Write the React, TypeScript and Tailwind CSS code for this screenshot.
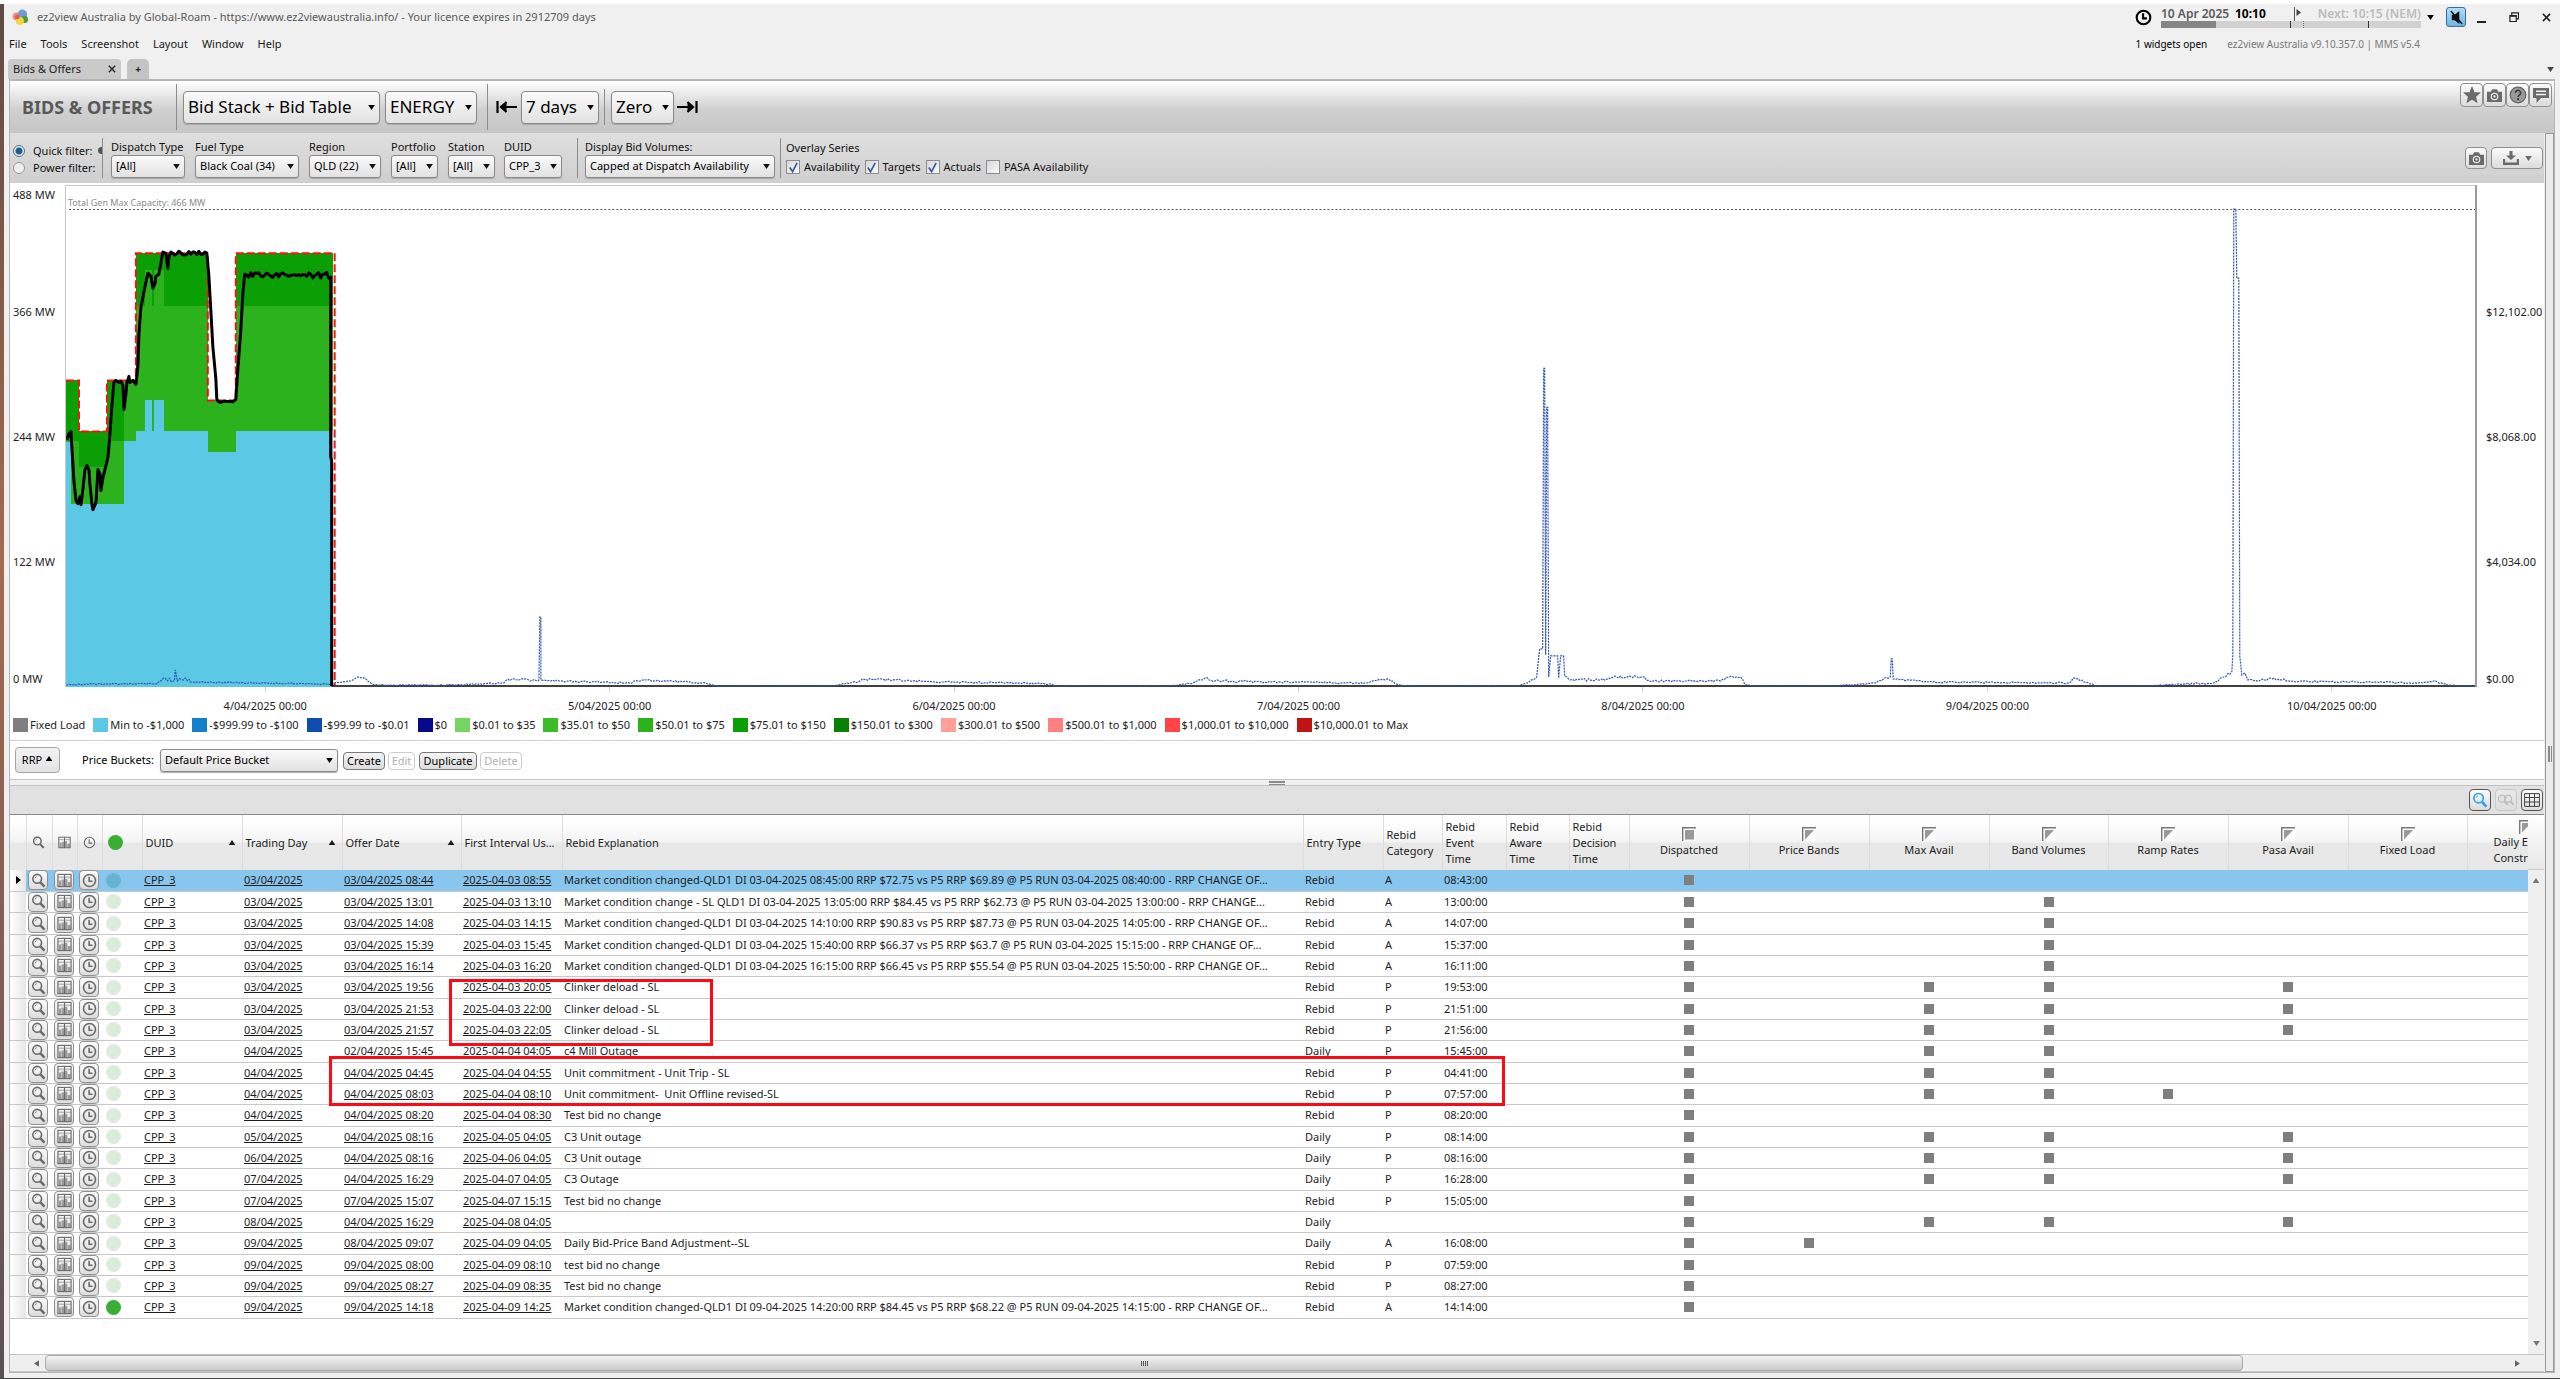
import { ReactNode, useId } from "react";

/* ---------- shared bits ---------- */

function Caret({ className = "" }: { className?: string }) {
  return (
    <svg viewBox="0 0 8 6" className={"h-[5px] w-[7px] " + className} aria-hidden="true">
      <path d="M0 0h8L4 6z" fill="currentColor" />
    </svg>
  );
}

function UpCaret({ className = "" }: { className?: string }) {
  return (
    <svg viewBox="0 0 8 6" className={"h-[5px] w-[8px] shrink-0 " + className} aria-hidden="true">
      <path d="M0 6h8L4 0z" fill="currentColor" />
    </svg>
  );
}

function Picker({
  value,
  label,
  size = "small",
  className,
}: {
  value: string;
  label: string;
  size?: "small" | "large";
  className: string;
}) {
  const look =
    size === "large" ? "h-[33px] rounded pl-1 text-[17px]" : "h-[23px] rounded-[3px] pl-1 text-[11px]";
  return (
    <span className={"inline-grid items-center " + className}>
      <select
        aria-label={label}
        className={
          "col-start-1 row-start-1 w-full appearance-none border border-[#8a8a8a] bg-linear-to-b from-[#fafafa] to-[#e2e2e2] text-black shadow-[0_1px_1px_#aaaaaa] " +
          look
        }
      >
        <option>{value}</option>
      </select>
      <Caret className="pointer-events-none col-start-1 row-start-1 mr-[5px] justify-self-end" />
    </span>
  );
}

function Field({ label, value, className }: { label: string; value: string; className: string }) {
  return (
    <div className={"flex shrink-0 flex-col " + className}>
      <span className="h-4 leading-4 whitespace-nowrap">{label}</span>
      <Picker label={label} value={value} className="w-full" />
    </div>
  );
}

function Divider({ className = "" }: { className?: string }) {
  return <span className={"w-px shrink-0 bg-[#8c8c8c] " + className} />;
}

function IconButton({
  label,
  className = "h-6 w-[23px]",
  strong,
  children,
}: {
  label: string;
  className?: string;
  strong?: boolean;
  children: ReactNode;
}) {
  return (
    <button
      aria-label={label}
      className={
        "flex shrink-0 items-center justify-center rounded border bg-linear-to-b from-[#fbfbfb] to-[#dcdcdc] text-[#6b6b6b] " +
        (strong ? "border-[#555555] " : "border-[#8f8f8f] ") +
        className
      }
    >
      {children}
    </button>
  );
}

/* ---------- icons ---------- */

function Magnifier({ className = "size-[14px]" }: { className?: string }) {
  return (
    <svg viewBox="0 0 16 16" className={className} fill="none" stroke="currentColor" aria-hidden="true">
      <circle cx="6.6" cy="6.2" r="4.7" strokeWidth="1.7" />
      <path d="M10 10l4.4 4.6" strokeWidth="2.6" />
      <path d="M4.2 5.6a2.6 2.6 0 0 1 1.8-1.8" strokeWidth="0.9" />
    </svg>
  );
}

function ChartTable({ className = "size-[14px]" }: { className?: string }) {
  return (
    <svg viewBox="0 0 16 16" className={className} fill="none" stroke="currentColor" aria-hidden="true">
      <rect x="1" y="1.5" width="14" height="13" strokeWidth="1.2" />
      <path d="M8 1.500v13" strokeWidth="1.2" />
      <path d="M2 8h2.500v6H2z M5 7h2.500v7H5z M8.500 6h2.500v8H8.500z M11.500 9.500h3V14h-3z" fill="currentColor" stroke="none" opacity="0.6" />
      <path d="M1 4.500h14" strokeWidth="0.6" />
    </svg>
  );
}

function ClockIcon({ className = "size-[14px]", width = 1.7 }: { className?: string; width?: number }) {
  return (
    <svg viewBox="0 0 16 16" className={className} fill="none" stroke="currentColor" aria-hidden="true">
      <circle cx="8" cy="8" r="6.4" strokeWidth={width} />
      <path d="M7.6 4v4.8h3.6" strokeWidth={width} />
    </svg>
  );
}

function CameraIcon() {
  return (
    <svg viewBox="0 0 18 16" className="h-[15px] w-[17px]" aria-hidden="true">
      <path fill="#6b6b6b" d="M1 4h4l1.5-2.6h5L13 4h4v11H1z" />
      <circle cx="9" cy="9" r="4" fill="#f2f2f2" />
      <circle cx="9" cy="9" r="2.8" fill="#6b6b6b" />
      <circle cx="9" cy="9" r="1.2" fill="#f2f2f2" />
    </svg>
  );
}

function StarIcon() {
  return (
    <svg viewBox="0 0 18 18" className="size-[18px]" aria-hidden="true">
      <path
        fill="#6b6b6b"
        stroke="#555"
        strokeWidth="0.5"
        d="M9 .8l2.3 5.6 6 .4-4.6 3.9 1.5 5.9L9 13.4l-5.2 3.2 1.5-5.9L.7 6.8l6-.4z"
      />
    </svg>
  );
}

function HelpIcon() {
  return (
    <svg viewBox="0 0 18 18" className="size-[18px]" fill="none" aria-hidden="true">
      <circle cx="9" cy="9" r="7.8" fill="#9a9a9a" stroke="#666" strokeWidth="1.2" />
      <path d="M6.4 7a2.6 2.6 0 1 1 4 2.1c-.9.6-1.3 1-1.3 2" stroke="#3a3a3a" strokeWidth="1.6" />
      <circle cx="9.1" cy="13.2" r="1.1" fill="#3a3a3a" />
    </svg>
  );
}

function CommentIcon() {
  return (
    <svg viewBox="0 0 18 18" className="size-[18px]" aria-hidden="true">
      <path fill="#6b6b6b" d="M1 2h16v10H9l-4.5 5V12H1z" />
      <path d="M4 5.3h10M4 8.6h10" stroke="#f4f4f4" strokeWidth="1.5" />
    </svg>
  );
}

function LogoIcon() {
  return (
    <svg viewBox="0 0 18 18" className="size-[17px] shrink-0" aria-hidden="true">
      <circle cx="5" cy="8" r="4.2" fill="#f08a7a" />
      <circle cx="11" cy="5.6" r="5" fill="#7796dc" />
      <circle cx="13.2" cy="11" r="3.8" fill="#4f9a3a" />
      <circle cx="8.4" cy="12.6" r="4.2" fill="#f6d33c" />
      <circle cx="5.6" cy="8.4" r="2.4" fill="#e9583f" />
    </svg>
  );
}

function RangeArrow({ direction }: { direction: "left" | "right" }) {
  return (
    <svg viewBox="0 0 22 14" className="h-[14px] w-[22px] shrink-0" fill="none" stroke="#000" aria-hidden="true">
      {direction === "left" ? (
        <>
          <path d="M1.5 1v12M5 7h16" strokeWidth="2.2" />
          <path d="M10.5 2L5 7l5.500 5" strokeWidth="2.2" fill="#000" />
        </>
      ) : (
        <>
          <path d="M20.500 1v12M1 7h16" strokeWidth="2.2" />
          <path d="M11.500 2L17 7l-5.500 5" strokeWidth="2.2" fill="#000" />
        </>
      )}
    </svg>
  );
}

/* ---------- window chrome ---------- */

function TitleBar() {
  return (
    <header className="flex h-[26px] items-center pr-[9px] pl-2 text-[11px] text-[#5a5a5a]">
      <LogoIcon />
      <h1 className="ml-2 whitespace-nowrap">
        ez2view Australia by Global-Roam - https://www.ez2viewaustralia.info/ - Your licence expires in 2912709 days
      </h1>
      <ClockIcon className="ml-auto size-[17px] shrink-0 text-black" width={2} />
      <div className="ml-[9px] flex w-[260px] shrink-0 flex-col">
        <div className="flex h-[14px] items-center text-[12px] font-semibold whitespace-nowrap">
          <span className="w-[74px]">10 Apr 2025</span>
          <span className="font-bold text-black">10:10</span>
          <svg viewBox="0 0 8 14" className="ml-auto h-[14px] w-2" aria-hidden="true">
            <path d="M.5 0v14" stroke="#555" />
            <path d="M2.500 2L7 5.500 2.500 9z" fill="#444" />
          </svg>
          <span className="ml-4 text-[#bcbcbc]">Next: 10:15 (NEM)</span>
        </div>
        <div className="flex h-[7px] bg-[#d2d2d2]">
          <span className="w-[55px] bg-[#858585]" />
          <span className="w-[75px] border-r border-[#333333]" />
          <span className="w-[13px] border-r border-dotted border-[#777777]" />
          <span className="w-[65px] border-r border-[#333333]" />
        </div>
      </div>
      <Caret className="ml-[6px] text-black" />
      <button
        aria-label="Mute"
        className="ml-[12px] flex size-[20px] shrink-0 items-center justify-center rounded-[3px] border border-[#3b6f96] bg-linear-to-b from-[#b4dcf4] to-[#6cb6e4]"
      >
        <svg viewBox="0 0 16 16" className="size-[15px]" aria-hidden="true">
          <path d="M3 5h3l5-4v14l-5-4H3z" fill="#111" />
          <path d="M2 1l12 14" stroke="#111" strokeWidth="1.5" />
        </svg>
      </button>
      <button aria-label="Minimize" className="ml-[11px] flex h-3 w-[9px] shrink-0 items-end">
        <span className="h-[2px] w-full bg-[#222222]" />
      </button>
      <button aria-label="Restore" className="ml-[23px] shrink-0">
        <svg viewBox="0 0 11 11" className="size-[10px]" fill="none" stroke="#222" aria-hidden="true">
          <path d="M1 4h7v6.500H1z M3 4V1h7.500v6.500H8" strokeWidth="1.3" />
          <path d="M1 4.500h7" strokeWidth="1.5" />
        </svg>
      </button>
      <button aria-label="Close" className="ml-[23px] shrink-0">
        <svg viewBox="0 0 10 10" className="size-[9px]" stroke="#222" strokeWidth="1.7" aria-hidden="true">
          <path d="M1 1l8 8M9 1l-8 8" />
        </svg>
      </button>
    </header>
  );
}

function MenuBar() {
  return (
    <nav className="flex h-[28px] items-center gap-[14px] pr-[6px] pl-[5px] text-[11px] text-[#1a1a1a]">
      {["File", "Tools", "Screenshot", "Layout", "Window", "Help"].map((m) => (
        <button key={m}>{m}</button>
      ))}
      <span className="ml-auto text-[10px] text-black">1 widgets open</span>
      <span className="mr-[134px] ml-[6px] text-[10px] text-[#7a7a7a]">ez2view Australia v9.10.357.0 | MMS v5.4</span>
    </nav>
  );
}

function TabStrip() {
  return (
    <div className="flex h-[21px] items-stretch pt-px pr-[6px] pl-[4px] text-[11px] text-[#222222]">
      <button className="flex w-[113px] items-center justify-between rounded-t-sm bg-[#cacaca] px-[5px]">
        Bids &amp; Offers
        <svg viewBox="0 0 10 10" className="size-2" stroke="#222" strokeWidth="1.700" aria-hidden="true">
          <path d="M1 1l8 8M9 1l-8 8" />
        </svg>
      </button>
      <button className="ml-[6px] w-[22px] rounded-t-[5px] bg-[#c4c4c4] text-[10px] font-bold">+</button>
      <Caret className="ml-auto self-center text-[#444444]" />
    </div>
  );
}

function MainToolbar() {
  return (
    <div className="flex h-[52px] items-center bg-linear-to-b from-white via-[#d0d0d0] via-55% to-[#c6c6c6] pl-[12px]">
      <h2 className="w-[154px] text-[18px] font-bold whitespace-nowrap text-[#595959]">BIDS &amp; OFFERS</h2>
      <Divider className="h-[46px]" />
      <Picker size="large" label="View" value="Bid Stack + Bid Table" className="ml-[6px] w-[197px]" />
      <Picker size="large" label="Market" value="ENERGY" className="ml-[5px] w-[92px]" />
      <Divider className="ml-[10px] h-[46px]" />
      <button aria-label="Range start" className="ml-[8px]">
        <RangeArrow direction="left" />
      </button>
      <Picker size="large" label="Range" value="7 days" className="ml-[3px] w-[78px]" />
      <Divider className="ml-[5px] h-[36px]" />
      <Picker size="large" label="Offset" value="Zero" className="ml-[6px] w-[63px]" />
      <button aria-label="Range end" className="ml-[2px]">
        <RangeArrow direction="right" />
      </button>
      <div className="mr-[2px] ml-auto flex self-start pt-[2px]">
        <IconButton label="Favourite">
          <StarIcon />
        </IconButton>
        <IconButton label="Screenshot">
          <CameraIcon />
        </IconButton>
        <IconButton label="Help">
          <HelpIcon />
        </IconButton>
        <IconButton label="Comment">
          <CommentIcon />
        </IconButton>
      </div>
    </div>
  );
}

function Radio({ label, checked }: { label: string; checked?: boolean }) {
  return (
    <label className="flex h-[17px] items-center gap-[8px] whitespace-nowrap">
      <input
        type="radio"
        name="filter-mode"
        defaultChecked={checked}
        className="size-[12px] appearance-none rounded-full border border-[#9a9a9a] bg-[#efefef] checked:border-[#5b6f7c] checked:bg-radial checked:from-[#1c5f86] checked:from-40% checked:to-[#e8f3f9] checked:to-60%"
      />
      {label}
    </label>
  );
}

function Check({ label, checked }: { label: string; checked?: boolean }) {
  const id = useId();
  return (
    <span className="flex items-center gap-1 whitespace-nowrap">
      <span className="inline-grid place-items-center">
        <input
          id={id}
          type="checkbox"
          defaultChecked={checked}
          className="peer col-start-1 row-start-1 size-[14px] appearance-none border border-[#8d8d8d] bg-linear-to-br from-[#d8d8d8] to-[#fafafa]"
        />
        <svg
          viewBox="0 0 12 12"
          className="pointer-events-none col-start-1 row-start-1 hidden size-[11px] peer-checked:block"
          fill="none"
          aria-hidden="true"
        >
          <path d="M2 6l3 4.500L10 1" stroke="#3a559c" strokeWidth="1.800" />
        </svg>
      </span>
      <label htmlFor={id}>{label}</label>
    </span>
  );
}

function FilterBar() {
  return (
    <div className="flex h-[50px] items-center bg-linear-to-b from-[#dfdfdf] to-[#cfcfcf] pl-[3px] text-[11px] text-[#111111]">
      <div className="w-[89px] overflow-hidden pt-[2px]">
        <div className="flex items-center">
          <Radio label="Quick filter:" checked />
          <span className="ml-auto h-[7px] w-1 rounded-l-full bg-[#555555]" />
        </div>
        <Radio label="Power filter:" />
      </div>
      <Divider className="h-[40px]" />
      <Field label="Dispatch Type" value="[All]" className="ml-[8px] w-[74px]" />
      <Field label="Fuel Type" value="Black Coal (34)" className="ml-[10px] w-[104px]" />
      <Field label="Region" value="QLD (22)" className="ml-[10px] w-[72px]" />
      <Field label="Portfolio" value="[All]" className="ml-[10px] w-[47px]" />
      <Field label="Station" value="[All]" className="ml-[10px] w-[47px]" />
      <Field label="DUID" value="CPP_3" className="ml-[9px] w-[58px]" />
      <Divider className="ml-[15px] h-[40px]" />
      <Field
        label="Display Bid Volumes:"
        value="Capped at Dispatch Availability"
        className="ml-[7px] w-[190px]"
      />
      <Divider className="ml-[5px] h-[40px]" />
      <div className="ml-[5px]">
        <div className="h-[18px] leading-[18px]">Overlay Series</div>
        <div className="flex h-[20px] items-center gap-[5px]">
          <Check label="Availability" checked />
          <Check label="Targets" checked />
          <Check label="Actuals" checked />
          <Check label="PASA Availability" />
        </div>
      </div>
      <div className="mr-px ml-auto flex gap-1">
        <IconButton label="Chart screenshot" className="h-[22px] w-[22px]">
          <CameraIcon />
        </IconButton>
        <IconButton label="Download" className="h-[22px] w-[52px] gap-[6px]">
          <svg viewBox="0 0 16 14" className="h-[14px] w-4" aria-hidden="true">
            <path fill="#6b6b6b" d="M6.500 0h3v4.500H13L8 9 3 4.500h3.500z M0 8h2.200v3.500h11.600V8H16v6H0z" />
          </svg>
          <Caret className="self-center" />
        </IconButton>
      </div>
    </div>
  );
}

/* ---------- chart ---------- */

type Pt = [number, number];

const noise = (i: number) => {
  const v = Math.sin(i * 12.9898) * 43758.5453;
  return (v - Math.floor(v)) * 2 - 1;
};

const toPath = (pts: Pt[]) => pts.map(([x, y], i) => (i ? "L" : "M") + x + " " + y.toFixed(1)).join("");

/* Fills the stretch between two points with a jittering trace. */
function jitter(x0: number, x1: number, y: number, amp: number, step: number): Pt[] {
  const out: Pt[] = [];
  for (let x = x0; x < x1; x += step) out.push([x, y + noise(x) * amp]);
  return out;
}

/* Anchor points of the price trace: x, y, jitter amplitude up to the next anchor. */
const priceAnchors: [number, number, number][] = [
  [0, 498, 0.6], [20, 497, 0.8], [90, 497, 0.8], [97, 491, 2], [108, 494, 0], [109, 483, 0], [111, 494, 1.5],
  [119, 491, 2], [124, 495, 0.6], [265, 497, 0.5], [268, 496, 0.5], [285, 494, 0.5], [292, 490, 0.5],
  [298, 491, 0.5], [306, 497, 0.6], [312, 498, 0.6], [390, 498, 0.7], [436, 496, 1.5], [446, 492, 1.5],
  [473, 493, 1], [474, 430, 0], [475, 430, 0], [475, 493, 1], [520, 495, 1], [560, 496, 1], [580, 493, 1.2],
  [622, 495, 0.8], [640, 496, 0.8], [650, 499, 0.4], [765, 499, 0.6], [785, 496, 1.2], [800, 492, 1.2],
  [830, 493, 1], [870, 495, 0.9], [960, 496, 0.9], [985, 497, 0.6], [990, 499, 0.4], [1100, 499, 0.6],
  [1128, 496, 1.2], [1140, 491, 1.4], [1150, 494, 1.2], [1200, 495, 1], [1300, 496, 1], [1322, 492, 1],
  [1335, 498, 0.5], [1345, 499, 0.3], [1452, 499, 0.6], [1462, 496, 1], [1472, 490, 1], [1475, 462, 0],
  [1478, 462, 0], [1479, 182, 0], [1480, 182, 0], [1481, 468, 0], [1482, 221, 0], [1483, 221, 0], [1484, 490, 0],
  [1486, 469, 0], [1493, 469, 0], [1494, 491, 0], [1496, 469, 0], [1499, 469, 0], [1500, 489, 1], [1506, 493, 1.4],
  [1540, 493, 1.4], [1552, 490, 1.2], [1578, 490, 1.4], [1585, 494, 1], [1656, 494, 1], [1664, 490, 1],
  [1676, 490, 1], [1682, 498, 0.5], [1690, 499, 0.4], [1772, 499, 0.6], [1812, 496, 1], [1820, 491, 1],
  [1826, 490, 0], [1827, 472, 0], [1828, 472, 0], [1829, 492, 1.2], [1845, 493, 1], [1860, 495, 0.8],
  [2005, 496, 0.8], [2010, 491, 1], [2022, 495, 0.6], [2032, 499, 0.4], [2084, 499, 0.6], [2120, 497, 1],
  [2150, 496, 1.2], [2160, 490, 1.2], [2168, 485, 0], [2169, 469, 0], [2170, 23, 0], [2172, 23, 0], [2173, 92, 0],
  [2175, 92, 0], [2176, 469, 0], [2178, 488, 0], [2181, 486, 0], [2184, 493, 1], [2195, 494, 1], [2210, 491, 1],
  [2225, 494, 0.9], [2355, 496, 0.7], [2370, 494, 0.8], [2384, 498, 0.6], [2395, 499, 0.3], [2411, 499, 0],
];

function buildPrice(): Pt[] {
  const out: Pt[] = [];
  priceAnchors.forEach(([x, y, amp], i) => {
    out.push([x, y]);
    const next = priceAnchors[i + 1];
    if (!next || amp === 0) return;
    for (let px = x + 2; px < next[0]; px += 2) {
      const t = (px - x) / (next[0] - x);
      out.push([px, Math.min(499.5, y + (next[1] - y) * t + noise(px) * amp)]);
    }
  });
  return out;
}

const actuals: Pt[] = [
  [1, 253], [3, 247], [5, 245], [6, 263], [8, 295], [10, 314], [12, 317], [14, 310], [15, 318], [17, 302],
  [19, 283], [21, 279], [23, 283], [24, 298], [26, 318], [27, 323], [30, 316], [31, 300], [32, 283], [34, 287],
  [35, 304], [37, 291], [40, 279], [42, 271], [44, 247], [46, 219], [48, 196], [50, 194], [53, 196], [55, 195],
  [57, 199], [58, 223], [60, 208], [61, 196], [63, 190], [64, 196], [67, 194], [70, 198], [72, 180], [73, 148],
  [75, 121], [77, 111], [79, 101], [82, 87], [85, 90], [87, 102], [89, 98], [90, 90], [93, 88], [95, 77],
  [97, 66], [100, 67], [102, 82], [103, 71], [105, 66],
  ...jitter(107, 141, 67, 2, 2),
  [141, 67], [143, 89], [145, 124], [147, 160], [150, 192], [151, 213],
  ...jitter(153, 169, 215, 1, 2),
  [170, 213], [172, 184], [175, 144], [177, 109], [179, 88],
  ...jitter(181, 265, 89, 3, 2),
  [265, 91], [265, 270], [266, 275], [266, 499],
];

const availability: Pt[] = [
  [0, 194], [13, 194], [13, 245], [41, 245], [41, 194], [70, 194], [70, 67], [142, 67], [142, 214], [170, 214],
  [170, 67], [269, 67], [269, 498],
];

/* x, width, top of the upper band, top of the middle band, top of the lowest band */
const stack: [number, number, number, number, number][] = [
  [0, 5, 194, 254, 255],
  [5, 8, 194, 254, 317],
  [13, 28, 245, 280, 317],
  [41, 17, 194, 254, 317],
  [58, 12, 194, 194, 254],
  [70, 9, 67, 120, 245],
  [79, 7, 67, 84, 214],
  [86, 2, 67, 120, 245],
  [88, 10, 67, 84, 214],
  [98, 44, 67, 120, 245],
  [142, 28, 214, 214, 265],
  [170, 97, 67, 120, 245],
];

function Plot() {
  return (
    <svg
      viewBox="0 0 2412 500"
      preserveAspectRatio="none"
      className="block h-[501px] w-full"
      role="img"
      aria-label="Bid stack with availability, targets, actuals and price"
    >
      <path d="M3 23.500H2412" stroke="#555" strokeDasharray="2 2" />
      {stack.map(([x, w, a, b, c]) => (
        <g key={x} shapeRendering="crispEdges">
          <rect x={x} y={a} width={w} height={b - a} fill="#0aa005" />
          <rect x={x} y={b} width={w} height={c - b} fill="#2cb21c" />
          <rect x={x} y={c} width={w} height={500 - c} fill="#5bc8e6" />
        </g>
      ))}
      <path d="M266 499H2412" stroke="#000" strokeWidth="1.500" />
      <path
        d={toPath(buildPrice())}
        transform="translate(0.5 0)"
        stroke="#2f55ae"
        strokeWidth="1.2"
        fill="none"
        strokeDasharray="2 1"
      />
      <path d={toPath(availability)} stroke="#ff1010" strokeWidth="2" fill="none" strokeDasharray="8 3" />
      <path d={toPath(actuals)} stroke="#000" strokeWidth="3" fill="none" strokeLinejoin="round" />
    </svg>
  );
}

const legend: [string, string][] = [
  ["bg-[#7f7f7f]", "Fixed Load"],
  ["bg-[#5bc8e6]", "Min to -$1,000"],
  ["bg-[#1480cc]", "-$999.99 to -$100"],
  ["bg-[#0e4cae]", "-$99.99 to -$0.01"],
  ["bg-[#08088a]", "$0"],
  ["bg-[#78d460]", "$0.01 to $35"],
  ["bg-[#3cbc28]", "$35.01 to $50"],
  ["bg-[#2cb21c]", "$50.01 to $75"],
  ["bg-[#0aa005]", "$75.01 to $150"],
  ["bg-[#0a8005]", "$150.01 to $300"],
  ["bg-[#ff9f97]", "$300.01 to $500"],
  ["bg-[#ff8080]", "$500.01 to $1,000"],
  ["bg-[#ff4545]", "$1,000.01 to $10,000"],
  ["bg-[#c01414]", "$10,000.01 to Max"],
];

function ChartPanel() {
  return (
    <section className="bg-white pt-[2px] text-[11px] text-[#222222]">
      <div className="grid grid-cols-[55px_1fr_67px]">
        <div className="flex flex-col pl-[3px] leading-4">
          {["488 MW", "366 MW", "244 MW", "122 MW"].map((t, i) => (
            <div key={t} className={i === 0 ? "h-[119px] pt-[2px]" : "h-[125px]"}>
              {t}
            </div>
          ))}
          <div className="-mt-2">0 MW</div>
        </div>
        <div className="relative border-t border-r-2 border-l border-t-[#c8c8c8] border-r-[#9a9a9a] border-l-[#c8c8c8]">
          <span className="absolute top-[9px] left-[2px] text-[9px] leading-4 text-[#8a8a8a]">
            Total Gen Max Capacity: 466 MW
          </span>
          <Plot />
        </div>
        <div className="flex flex-col pl-[9px] leading-4">
          {["", "$12,102.00", "$8,068.00", "$4,034.00"].map((t, i) => (
            <div key={t} className={i === 0 ? "h-[119px]" : "h-[125px]"}>
              {t}
            </div>
          ))}
          <div className="-mt-2">$0.00</div>
        </div>
      </div>
      <div className="mr-[40px] ml-[83px] grid grid-cols-7 text-center leading-4">
        {["4/04/2025", "5/04/2025", "6/04/2025", "7/04/2025", "8/04/2025", "9/04/2025", "10/04/2025"].map((d) => (
          <span key={d} className="flex flex-col items-center">
            <span className="mb-[6px] h-[5px] w-px bg-[#cfcfcf]" />
            {d} 00:00
          </span>
        ))}
      </div>
      <ul className="mt-1 flex h-[14px] items-stretch gap-2 pl-[3px] leading-[14px]">
        {legend.map(([color, text]) => (
          <li key={text} className="flex whitespace-nowrap">
            <span className={"mr-[2px] w-[15px] " + color} />
            {text}
          </li>
        ))}
      </ul>
      <BucketBar />
    </section>
  );
}

function SmallButton({ text, off, className }: { text: string; off?: boolean; className: string }) {
  return (
    <button
      disabled={off}
      className={
        "h-[18px] rounded border text-[11px] leading-4 " +
        (off ? "border-[#cccccc] text-[#b0b0b0] " : "border-[#777777] bg-linear-to-b from-[#f5f5f5] to-[#dddddd] ") +
        className
      }
    >
      {text}
    </button>
  );
}

function BucketBar() {
  return (
    <div className="mt-[8px] flex h-[39px] items-center border-t border-[#d0d0d0] pl-[5px] text-black">
      <button className="flex h-[26px] w-[45px] items-center justify-center gap-[3px] rounded border border-[#a5a5a5] bg-linear-to-b from-[#f3f3f3] to-[#e2e2e2]">
        RRP
        <UpCaret className="mb-1" />
      </button>
      <span className="ml-[22px] w-[78px] whitespace-nowrap">Price Buckets:</span>
      <Picker label="Price Buckets" value="Default Price Bucket" className="w-[178px]" />
      <SmallButton text="Create" className="mt-[2px] ml-[5px] w-[42px]" />
      <SmallButton text="Edit" off className="mt-[2px] ml-[3px] w-[27px]" />
      <SmallButton text="Duplicate" className="mt-[2px] ml-[4px] w-[58px]" />
      <SmallButton text="Delete" off className="mt-[2px] ml-[3px] w-[42px]" />
    </div>
  );
}

/* ---------- bid table ---------- */

type Row = {
  day: string;
  offer: string;
  first: string;
  text: string;
  type: string;
  cat: string;
  time: string;
  marks: string;
};

/* marks: d=Dispatched p=Price Bands m=Max Avail v=Band Volumes r=Ramp Rates a=Pasa Avail */
const rows: Row[] = (
  [
    ["03/04/2025", "03/04/2025 08:44", "2025-04-03 08:55", "Market condition changed-QLD1 DI 03-04-2025 08:45:00 RRP $72.75 vs P5 RRP $69.89 @ P5 RUN 03-04-2025 08:40:00 - RRP CHANGE OF...", "Rebid", "A", "08:43:00", "d"],
    ["03/04/2025", "03/04/2025 13:01", "2025-04-03 13:10", "Market condition change - SL QLD1 DI 03-04-2025 13:05:00 RRP $84.45 vs P5 RRP $62.73 @ P5 RUN 03-04-2025 13:00:00 - RRP CHANGE...", "Rebid", "A", "13:00:00", "dv"],
    ["03/04/2025", "03/04/2025 14:08", "2025-04-03 14:15", "Market condition changed-QLD1 DI 03-04-2025 14:10:00 RRP $90.83 vs P5 RRP $87.73 @ P5 RUN 03-04-2025 14:05:00 - RRP CHANGE OF...", "Rebid", "A", "14:07:00", "dv"],
    ["03/04/2025", "03/04/2025 15:39", "2025-04-03 15:45", "Market condition changed-QLD1 DI 03-04-2025 15:40:00 RRP $66.37 vs P5 RRP $63.7 @ P5 RUN 03-04-2025 15:15:00 - RRP CHANGE OF...", "Rebid", "A", "15:37:00", "dv"],
    ["03/04/2025", "03/04/2025 16:14", "2025-04-03 16:20", "Market condition changed-QLD1 DI 03-04-2025 16:15:00 RRP $66.45 vs P5 RRP $55.54 @ P5 RUN 03-04-2025 15:50:00 - RRP CHANGE OF...", "Rebid", "A", "16:11:00", "dv"],
    ["03/04/2025", "03/04/2025 19:56", "2025-04-03 20:05", "Clinker deload - SL", "Rebid", "P", "19:53:00", "dmva"],
    ["03/04/2025", "03/04/2025 21:53", "2025-04-03 22:00", "Clinker deload - SL", "Rebid", "P", "21:51:00", "dmva"],
    ["03/04/2025", "03/04/2025 21:57", "2025-04-03 22:05", "Clinker deload - SL", "Rebid", "P", "21:56:00", "dmva"],
    ["04/04/2025", "02/04/2025 15:45", "2025-04-04 04:05", "c4 Mill Outage", "Daily", "P", "15:45:00", "dmv"],
    ["04/04/2025", "04/04/2025 04:45", "2025-04-04 04:55", "Unit commitment - Unit Trip - SL", "Rebid", "P", "04:41:00", "dmv"],
    ["04/04/2025", "04/04/2025 08:03", "2025-04-04 08:10", "Unit commitment-  Unit Offline revised-SL", "Rebid", "P", "07:57:00", "dmvr"],
    ["04/04/2025", "04/04/2025 08:20", "2025-04-04 08:30", "Test bid no change", "Rebid", "P", "08:20:00", "d"],
    ["05/04/2025", "04/04/2025 08:16", "2025-04-05 04:05", "C3 Unit outage", "Daily", "P", "08:14:00", "dmva"],
    ["06/04/2025", "04/04/2025 08:16", "2025-04-06 04:05", "C3 Unit outage", "Daily", "P", "08:16:00", "dmva"],
    ["07/04/2025", "04/04/2025 16:29", "2025-04-07 04:05", "C3 Outage", "Daily", "P", "16:28:00", "dmva"],
    ["07/04/2025", "07/04/2025 15:07", "2025-04-07 15:15", "Test bid no change", "Rebid", "P", "15:05:00", "d"],
    ["08/04/2025", "04/04/2025 16:29", "2025-04-08 04:05", "", "Daily", "", "", "dmva"],
    ["09/04/2025", "08/04/2025 09:07", "2025-04-09 04:05", "Daily Bid-Price Band Adjustment--SL", "Daily", "A", "16:08:00", "dp"],
    ["09/04/2025", "09/04/2025 08:00", "2025-04-09 08:10", "test bid no change", "Rebid", "P", "07:59:00", "d"],
    ["09/04/2025", "09/04/2025 08:27", "2025-04-09 08:35", "Test bid no change", "Rebid", "P", "08:27:00", "d"],
    ["09/04/2025", "09/04/2025 14:18", "2025-04-09 14:25", "Market condition changed-QLD1 DI 09-04-2025 14:20:00 RRP $84.45 vs P5 RRP $68.22 @ P5 RUN 09-04-2025 14:15:00 - RRP CHANGE OF...", "Rebid", "A", "14:14:00", "d"],
  ] as const
).map(([day, offer, first, text, type, cat, time, marks]) => ({ day, offer, first, text, type, cat, time, marks }));

const columnWidths = [
  "w-[16px]", "w-[26px]", "w-[25px]", "w-[25px]", "w-[40px]", "w-[100px]", "w-[100px]", "w-[119px]", "w-[101px]",
  "", "w-[80px]", "w-[59px]", "w-[64px]", "w-[63px]", "w-[60px]", "w-[120px]", "w-[120px]", "w-[120px]",
  "w-[119px]", "w-[120px]", "w-[120px]", "w-[119px]", "w-[61px]",
];

function HeadCell({ text, sorted, className = "" }: { text: string; sorted?: boolean; className?: string }) {
  return (
    <th className="border-r border-[#dddddd] p-0 text-left font-normal">
      <div className={"flex items-center justify-between pl-[3px] leading-4 " + className}>
        <span>{text}</span>
        {sorted && <UpCaret className="mr-[6px]" />}
      </div>
    </th>
  );
}

function TriState({ solid }: { solid?: boolean }) {
  return (
    <svg viewBox="0 0 14 14" className="size-[14px]" aria-hidden="true">
      <rect width="14" height="14" fill="#fafafa" />
      <path d="M14 .700H.700V14" stroke="#777" strokeWidth="1.400" fill="none" />
      <path d={solid ? "M3 3h9v9.500H3z" : "M3 3h9L3 12.500z"} fill="#999" />
    </svg>
  );
}

function MarkHead({ text, solid }: { text: string; solid?: boolean }) {
  return (
    <th className="border-r border-[#dddddd] p-0 font-normal">
      <div className="flex flex-col items-center gap-px leading-4">
        <TriState solid={solid} />
        {text}
      </div>
    </th>
  );
}

function IconHead({ children }: { children: ReactNode }) {
  return <th className="border-r border-[#dddddd] p-0 pl-[5px] text-[#666666]">{children}</th>;
}

function RowButton({ label, children }: { label: string; children: ReactNode }) {
  return (
    <td className="p-0 pl-[2px]">
      <IconButton label={label} className="h-[20px] w-[20px]">
        {children}
      </IconButton>
    </td>
  );
}

function LinkCell({ text }: { text: string }) {
  return (
    <td className="p-0 pl-[2px] whitespace-nowrap">
      <a href="#" className="underline">
        {text}
      </a>
    </td>
  );
}

function BidRow({ row, selected, last }: { row: Row; selected: boolean; last: boolean }) {
  return (
    <tr
      className={
        "h-[21px] border-b border-[#c8c8c8] leading-4 nth-[3n]:h-[22px] " + (selected ? "bg-[#89c6ee]" : "bg-white")
      }
    >
      <td className="bg-linear-to-r from-white to-[#e6e6e6] p-0">
        {selected && (
          <svg viewBox="0 0 5 8" className="mx-auto h-2 w-[5px]" aria-hidden="true">
            <path d="M0 0l5 4-5 4z" fill="#000" />
          </svg>
        )}
      </td>
      <RowButton label="Inspect">
        <Magnifier className="size-[15px]" />
      </RowButton>
      <RowButton label="Compare">
        <ChartTable className="size-[15px]" />
      </RowButton>
      <RowButton label="History">
        <ClockIcon className="size-[15px]" />
      </RowButton>
      <td className="p-0 pl-1">
        <span
          className={
            "block size-[15px] rounded-full " +
            (last ? "bg-[#39ae35]" : selected ? "bg-[#66b4cf]" : "bg-[#dcecdb]")
          }
        />
      </td>
      <LinkCell text="CPP_3" />
      <LinkCell text={row.day} />
      <LinkCell text={row.offer} />
      <LinkCell text={row.first} />
      <td className="p-0 pl-[2px] whitespace-pre">{row.text}</td>
      <td className="p-0 pl-[2px]">{row.type}</td>
      <td className="p-0 pl-[2px]">{row.cat}</td>
      <td className="p-0 pl-[2px]">{row.time}</td>
      <td />
      <td />
      {"dpmvraf".split("").map((k) => (
        <td key={k} className="p-0">
          {row.marks.includes(k) && <span className="mx-auto block size-[10px] bg-[#7f7f7f]" />}
        </td>
      ))}
      <td />
    </tr>
  );
}

function BidTable() {
  return (
    <div className="flex h-[540px] border-t border-[#8a8a8a] bg-white text-[11px] text-[#1c1c1c]">
      <div className="relative min-w-0 flex-1 overflow-hidden">
        <table className="w-full table-fixed border-collapse">
          <colgroup>
            {columnWidths.map((w, i) => (
              <col key={i} className={w} />
            ))}
          </colgroup>
          <thead>
            <tr className="h-[55px] bg-linear-to-b from-white from-10% via-[#f4f4f4] via-48% to-[#e8e8e8] to-52%">
              <th className="border-r border-[#dddddd] p-0" />
              <IconHead><Magnifier className="size-[13px]" /></IconHead>
              <IconHead><ChartTable className="size-[13px]" /></IconHead>
              <IconHead><ClockIcon className="size-[13px]" width={1.3} /></IconHead>
              <IconHead>
                <span className="block size-[15px] rounded-full bg-[#39ae35]" />
              </IconHead>
              <HeadCell text="DUID" sorted />
              <HeadCell text="Trading Day" sorted />
              <HeadCell text="Offer Date" sorted />
              <HeadCell text="First Interval Us..." className="whitespace-nowrap" />
              <HeadCell text="Rebid Explanation" />
              <HeadCell text="Entry Type" />
              <HeadCell text="Rebid Category" />
              <HeadCell text="Rebid Event Time" className="pr-[20px]" />
              <HeadCell text="Rebid Aware Time" className="pr-[20px]" />
              <HeadCell text="Rebid Decision Time" />
              <MarkHead text="Dispatched" solid />
              <MarkHead text="Price Bands" />
              <MarkHead text="Max Avail" />
              <MarkHead text="Band Volumes" />
              <MarkHead text="Ramp Rates" />
              <MarkHead text="Pasa Avail" />
              <MarkHead text="Fixed Load" />
              <th className="overflow-hidden p-0 font-normal">
                <div className="pl-[26px] text-left leading-4 whitespace-nowrap">
                  <span className="ml-[25px] flex w-[14px]"><TriState /></span>
                  Daily E
                  <br />
                  Constr
                </div>
              </th>
            </tr>
          </thead>
          <tbody>
            {rows.map((r, i) => (
              <BidRow key={i} row={r} selected={i === 0} last={i === rows.length - 1} />
            ))}
          </tbody>
        </table>
        <span className="absolute top-[164px] left-[439px] h-[67px] w-[264px] border-[3px] border-[#ff0a14]" />
        <span className="absolute top-[241px] left-[319px] h-[50px] w-[1176px] border-[3px] border-[#ff0a14]" />
      </div>
      <div className="flex w-4 flex-col">
        <div className="h-[55px] border-b border-[#cccccc] bg-linear-to-b from-white to-[#e8e8e8]" />
        <div className="flex flex-1 flex-col items-center justify-between bg-[#efefef] py-2 text-[#777777]">
          <UpCaret />
          <Caret />
        </div>
      </div>
    </div>
  );
}

function HorizontalScroll() {
  return (
    <div className="flex h-[18px] items-center border-y border-[#c4c4c4] bg-[#efefef] pr-6 pl-6 text-[#666666]">
      <svg viewBox="0 0 6 8" className="h-[7px] w-[5px]" aria-hidden="true">
        <path d="M6 0v8L0 4z" fill="currentColor" />
      </svg>
      <div className="flex h-4 flex-1 pl-[6px]">
        <div className="flex w-[89%] items-center justify-center gap-px rounded-sm border border-[#a9a9a9] bg-linear-to-b from-[#f4f4f4] via-[#dedede] to-[#cccccc]">
          {[0, 1, 2, 3].map((i) => (
            <span key={i} className="h-[5px] w-px bg-[#555555]" />
          ))}
        </div>
      </div>
      <svg viewBox="0 0 6 8" className="h-[7px] w-[5px]" aria-hidden="true">
        <path d="M0 0v8l6-4z" fill="currentColor" />
      </svg>
    </div>
  );
}

function TablePanel() {
  return (
    <section>
      <div className="flex h-[28px] items-center justify-end gap-1 bg-[#e1e1e1] pr-px">
        <IconButton label="Search" strong className="size-[22px]">
          <Magnifier className="size-4 text-[#2ba0f5]" />
        </IconButton>
        <IconButton label="Search all" className="size-[22px] opacity-30">
          <Magnifier className="-mr-[6px] size-3" />
          <Magnifier className="size-3" />
        </IconButton>
        <IconButton label="Columns" strong className="size-[22px]">
          <svg viewBox="0 0 16 14" className="h-[14px] w-4" fill="none" stroke="#444" aria-hidden="true">
            <path d="M.600.600h14.800v12.800H.600z M.600 4.500h14.800M.600 9h14.800M5.500.600v12.800M10.500.600v12.800" />
          </svg>
        </IconButton>
      </div>
      <BidTable />
      <HorizontalScroll />
    </section>
  );
}

export default function App() {
  return (
    <div className="flex min-h-screen flex-col bg-[#f0f0f0] font-['Noto_Sans','Open_Sans',sans-serif] leading-4">
      <div className="h-1 bg-white" />
      <div className="flex flex-1">
        <div className="w-1 bg-linear-to-b from-[#5e4a44] via-[#a56a52] via-40% to-[#5b4f55]" />
        <div className="flex min-w-0 flex-1 flex-col">
          <TitleBar />
          <MenuBar />
          <TabStrip />
          <div className="mr-[5px] ml-[5px] flex flex-col border-t-2 border-r border-b border-l border-[#b5b5b5]">
            <MainToolbar />
            <div className="flex">
              <div className="min-w-0 flex-1">
                <FilterBar />
                <ChartPanel />
                <div className="flex h-[7px] flex-col items-center justify-center gap-px border-y border-[#c4c4c4] bg-[#f0f0f0]">
                  <span className="h-[2px] w-4 bg-[#8a8a8a]" />
                  <span className="h-px w-4 bg-[#8a8a8a]" />
                </div>
                <TablePanel />
              </div>
              <div className="ml-px flex w-[9px] justify-center gap-px border border-[#999999] bg-[#ececec] pt-[612px]">
                <span className="h-4 w-[2px] bg-[#8a8a8a]" />
                <span className="h-4 w-px bg-[#8a8a8a]" />
              </div>
            </div>
          </div>
        </div>
      </div>
      <div className="h-px bg-[#4a4a4a]" />
    </div>
  );
}
